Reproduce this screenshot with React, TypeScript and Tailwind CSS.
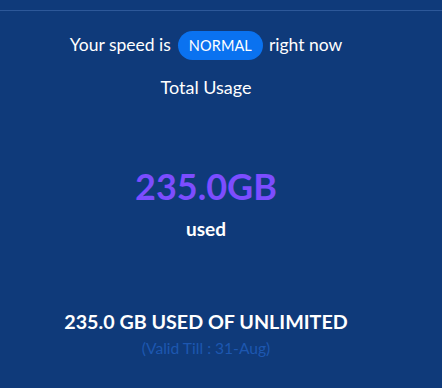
import React from 'react';

export default function App() {
  return (
    <div
      className="w-[442px] h-[388px] bg-[#0f3a7a] overflow-hidden text-white"
      style={{ fontFamily: 'Lato, "Noto Sans", sans-serif' }}
    >
      <div className="pt-[10px]">
        <div className="h-px bg-[#2d5899]" />
      </div>
      <div className="flex flex-col items-center pr-[30px]">
        <div className="mt-[20px] flex items-center text-[17.5px]">
          <span>Your speed is</span>
          <span className="ml-[7px] mr-[6px] h-[29px] px-[11px] rounded-full bg-[#0a72f0] flex items-center text-[14.5px] tracking-[0.1px]">
            NORMAL
          </span>
          <span>right now</span>
        </div>
        <div className="mt-[14px] text-[18px]">Total Usage</div>
        <div className="mt-[67px] text-[36px] font-bold leading-none text-[#7c4dff]">235.0GB</div>
        <div className="mt-[11px] text-[19px] font-bold">used</div>
        <div className="mt-[63px] text-[19.7px] font-bold">235.0 GB USED OF UNLIMITED</div>
        <div className="mt-[1px] text-[15.6px] text-[#1d57b0]">(Valid Till : 31-Aug)</div>
      </div>
    </div>
  );
}
